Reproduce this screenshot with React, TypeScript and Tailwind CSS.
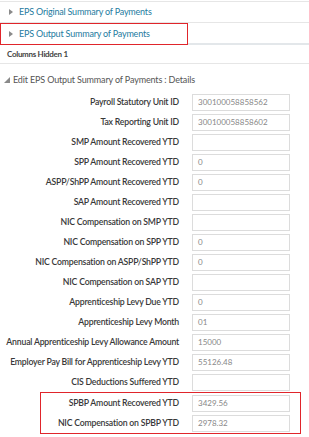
import React from "react";

const fields: { label: string; value: string }[] = [
  { label: "Payroll Statutory Unit ID", value: "300100058858562" },
  { label: "Tax Reporting Unit ID", value: "300100058858602" },
  { label: "SMP Amount Recovered YTD", value: "" },
  { label: "SPP Amount Recovered YTD", value: "0" },
  { label: "ASPP/ShPP Amount Recovered YTD", value: "0" },
  { label: "SAP Amount Recovered YTD", value: "" },
  { label: "NIC Compensation on SMP YTD", value: "" },
  { label: "NIC Compensation on SPP YTD", value: "0" },
  { label: "NIC Compensation on ASPP/ShPP YTD", value: "0" },
  { label: "NIC Compensation on SAP YTD", value: "" },
  { label: "Apprenticeship Levy Due YTD", value: "0" },
  { label: "Apprenticeship Levy Month", value: "01" },
  { label: "Annual Apprenticeship Levy Allowance Amount", value: "15000" },
  { label: "Employer Pay Bill for Apprenticeship Levy YTD", value: "55126.48" },
  { label: "CIS Deductions Suffered YTD", value: "" },
];

const highlighted = [
  { label: "SPBP Amount Recovered YTD", value: "3429.56" },
  { label: "NIC Compensation on SPBP YTD", value: "2978.32" },
];

function Field({ label, value, labelWidth }: { label: string; value: string; labelWidth: string }) {
  return (
    <div className="flex h-[20px] items-center">
      <div className={`${labelWidth} shrink-0 whitespace-nowrap text-right text-[8.7px] font-semibold tracking-[-0.2px] text-[#383838]`}>
        {label}
      </div>
      <div className="ml-[13px] flex h-[17px] w-[98px] items-center border border-[#dcdcdc] bg-white pl-[5px] text-[8px] text-[#888]">
        {value}
      </div>
    </div>
  );
}

function Caret() {
  return (
    <svg width="4" height="6" viewBox="0 0 4 6" className="shrink-0">
      <path d="M0 0 L4 3 L0 6 Z" fill="#8a8a8a" />
    </svg>
  );
}

export default function App() {
  return (
    <div className="h-[437px] w-[309px] overflow-hidden bg-white font-['Lato',sans-serif]">
      {/* table rows */}
      <div className="mt-[1px] h-[1px] bg-[#e6e6e6]" />
      <div className="flex h-[21px] items-center gap-[6px] border-b border-[#e6e6e6] pl-[9px]">
        <Caret />
        <span className="text-[9px] tracking-[-0.2px] text-[#257ba0]">EPS Original Summary of Payments</span>
      </div>
      <div className="flex h-[22px]">
        <div className="flex w-[188px] items-center gap-[6px] border border-[#e0252b] pl-[8px]">
          <Caret />
          <span className="text-[9px] tracking-[-0.2px] text-[#257ba0]">EPS Output Summary of Payments</span>
        </div>
        <div className="flex-1 border-b-2 border-[#e3e7ea]" />
      </div>
      <div className="flex h-[19px] items-center border-b border-[#e6e6e6] pl-[7px] text-[8px] font-bold tracking-[-0.3px] text-[#444]">
        Columns Hidden 1
      </div>

      {/* details */}
      <div className="mt-[8px] flex h-[16px] items-center gap-[3px] pl-[4px]">
        <svg width="6" height="6" viewBox="0 0 6 6" className="shrink-0">
          <path d="M6 0 L6 6 L0 6 Z" fill="#8a8a8a" />
        </svg>
        <span className="text-[9px] tracking-[-0.15px] text-[#555]">Edit EPS Output Summary of Payments : Details</span>
      </div>

      <div className="mt-[4px] flex flex-col">
        {fields.map((f) => (
          <Field key={f.label} label={f.label} value={f.value} labelWidth="w-[179px]" />
        ))}
        <div className="ml-[40px] w-[261px] border border-[#e0252b]">
          {highlighted.map((f) => (
            <Field key={f.label} label={f.label} value={f.value} labelWidth="w-[138px]" />
          ))}
        </div>
      </div>
    </div>
  );
}
